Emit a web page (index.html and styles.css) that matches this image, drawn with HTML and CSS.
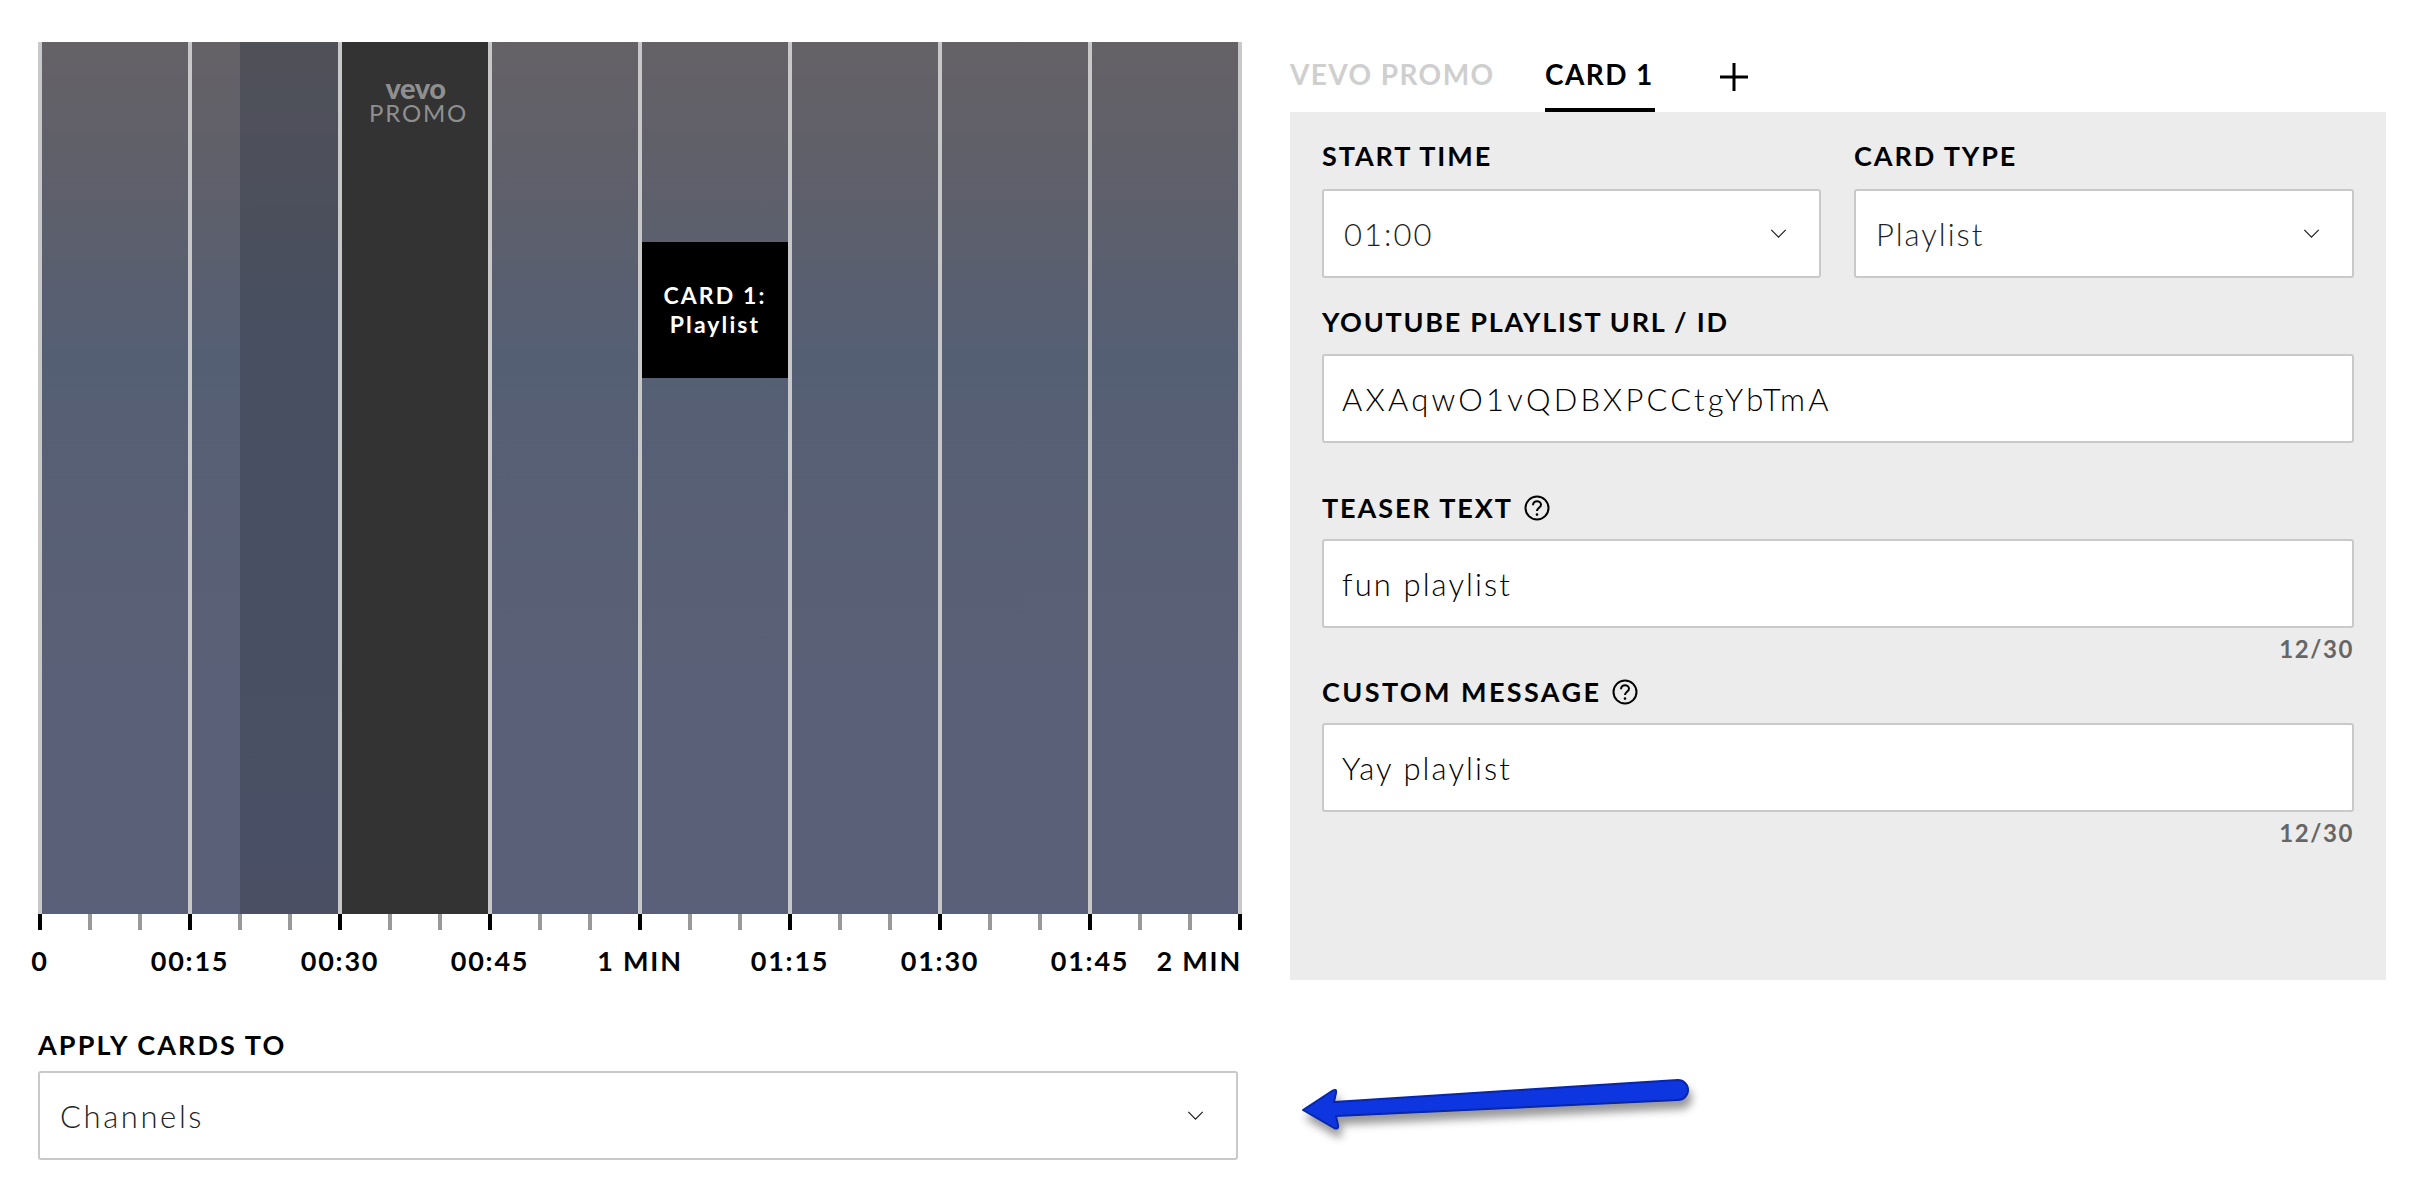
FILE: index.html
```html
<!DOCTYPE html>
<html lang="en">
<head>
<meta charset="utf-8">
<title>Cards</title>
<link rel="stylesheet" href="styles.css">
</head>
<body>
<main class="page">
  <section class="left">
    <div class="timeline">
      <div class="seg"></div>
      <div class="seg"><div class="shade"></div></div>
      <div class="seg promo"><div class="vevo">vevo</div><div class="promo-text">PROMO</div></div>
      <div class="seg"></div>
      <div class="seg"><div class="card-block">CARD 1:<br>Playlist</div></div>
      <div class="seg"></div>
      <div class="seg"></div>
      <div class="seg"></div>
    </div>
    <div class="ticks"></div>
    <div class="tick-labels">
      <span class="tl">0</span><span class="tl">00:15</span><span class="tl">00:30</span><span class="tl">00:45</span><span class="tl">1 MIN</span><span class="tl">01:15</span><span class="tl">01:30</span><span class="tl">01:45</span><span class="tl end">2 MIN</span>
    </div>
    <div class="apply">
      <label class="label">APPLY CARDS TO</label>
      <div class="box select"><span class="value dim wide">Channels</span><svg class="chev" viewBox="0 0 18 10"><path d="M1 1l8 8 8-8"/></svg></div>
    </div>
  </section>
  <section class="right">
    <nav class="tabs">
      <span class="tab off">VEVO PROMO</span>
      <span class="tab on">CARD 1</span>
      <svg class="plus" viewBox="0 0 28 28"><path d="M14 0v28M0 14h28"/></svg>
    </nav>
    <div class="panel">
      <div class="row">
        <div class="field"><label class="label">START TIME</label><div class="box select"><span class="value dim">01:00</span><svg class="chev" viewBox="0 0 18 10"><path d="M1 1l8 8 8-8"/></svg></div></div>
        <div class="field"><label class="label">CARD TYPE</label><div class="box select"><span class="value dim">Playlist</span><svg class="chev" viewBox="0 0 18 10"><path d="M1 1l8 8 8-8"/></svg></div></div>
      </div>
      <div class="field url"><label class="label">YOUTUBE PLAYLIST URL / ID</label><div class="box text"><span class="value long">AXAqwO1vQDBXPCCtgYbTmA</span></div></div>
      <div class="field teaser">
        <label class="label">TEASER TEXT <svg class="help" viewBox="0 0 26 26"><circle cx="13" cy="13" r="11.5"/><path d="M9 10.2c0-2.4 1.8-3.9 4-3.9s4 1.4 4 3.5c0 3-4 3-4 6.2"/><circle class="dot" cx="13" cy="19.6" r="1.3"/></svg></label>
        <div class="box text"><span class="value">fun playlist</span></div>
        <div class="count">12/30</div>
      </div>
      <div class="field custom">
        <label class="label">CUSTOM MESSAGE <svg class="help" viewBox="0 0 26 26"><circle cx="13" cy="13" r="11.5"/><path d="M9 10.2c0-2.4 1.8-3.9 4-3.9s4 1.4 4 3.5c0 3-4 3-4 6.2"/><circle class="dot" cx="13" cy="19.6" r="1.3"/></svg></label>
        <div class="box text"><span class="value">Yay playlist</span></div>
        <div class="count">12/30</div>
      </div>
    </div>
    <svg class="arrow" viewBox="0 0 420 84" width="420" height="84">
      <defs><filter id="sh" x="-5%" y="-40%" width="110%" height="200%"><feDropShadow dx="3" dy="8" stdDeviation="4" flood-color="#000" flood-opacity=".4"/></filter></defs>
      <path filter="url(#sh)" d="M13 40 L42 21 Q47 18 46 23 L44 32 L388 10 A10 10 0 0 1 388 30 L46 46 L48 55 Q49 60 44 58 Z" fill="#0a35e0" stroke="#0726a8" stroke-width="2" stroke-linejoin="round"/>
    </svg>
  </section>
</main>
</body>
</html>
```
FILE: styles.css
```css
* { box-sizing: border-box; }
html, body { margin: 0; padding: 0; background: #fff; }
body { width: 2420px; height: 1188px; overflow: hidden; font-family: Lato, "Noto Sans", sans-serif; color: #000; }
.page { display: flex; gap: 48px; padding: 42px 0 0 38px; }
.left { width: 1204px; flex: none; }
.right { width: 1096px; flex: none; position: relative; margin-top: -42px; }

.timeline { display: flex; width: 1204px; height: 872px; border-right: 4px solid #c8c8c8; background: linear-gradient(180deg, #656266 0%, #5d5f6c 20%, #555f74 36%, #596076 60%, #5a6079 100%); }
.seg { position: relative; flex: 0 0 150px; border-left: 4px solid #c8c8c8; }
.shade { position: absolute; top: 0; bottom: 0; left: 48px; right: 0; background: rgba(50, 55, 70, .4); }
.promo { background: #333; display: flex; flex-direction: column; align-items: center; color: #8f8f8f; padding: 34px 0 0 7px; }
.vevo { font-size: 29px; line-height: 24px; font-weight: 900; letter-spacing: -.5px; margin-right: 6px; }
.promo-text { font-size: 24px; line-height: 25px; letter-spacing: 1.8px; }
.card-block { position: absolute; left: 0; top: 200px; width: 146px; height: 136px; background: #000; color: #fff; display: flex; align-items: center; justify-content: center; text-align: center; font-size: 23px; line-height: 29px; font-weight: 700; letter-spacing: 2.1px; }

.ticks { width: 1204px; height: 16px; background:
  repeating-linear-gradient(90deg, #000 0 4px, transparent 4px 150px),
  repeating-linear-gradient(90deg, #999 0 4px, transparent 4px 50px); }
.tick-labels { display: flex; gap: 146px; height: 46px; padding-top: 15px; width: 1204px; }
.tl { flex: 0 0 4px; width: 4px; display: flex; justify-content: center; white-space: nowrap; font-size: 27px; line-height: 32px; font-weight: 700; letter-spacing: 1.8px; }
.tl.end { justify-content: flex-end; }

.apply { margin-top: 53px; width: 1200px; }
.apply .box { margin-top: 10px; }
.apply .label { letter-spacing: 2.1px; }
.label { display: flex; align-items: center; gap: 11px; font-size: 27px; line-height: 32px; font-weight: 700; letter-spacing: 1.9px; white-space: nowrap; }
.box { display: flex; align-items: center; justify-content: space-between; height: 89px; background: #fff; border: 2px solid #c9c9c9; border-radius: 3px; padding: 0 18px 0 20px; margin-top: 16px; }
.box.text { padding-left: 18px; }
.value { font-size: 31px; font-weight: 300; letter-spacing: 2.1px; color: #000; }
.value.long { letter-spacing: 3.2px; }
.value.dim { letter-spacing: 2px; color: #222; }
.value.wide { letter-spacing: 2.6px; }
.chev { width: 17px; height: 9px; margin-right: 14px; fill: none; stroke: #222; stroke-width: 1.4; flex: none; }

.tabs { display: flex; height: 112px; padding-top: 56px; align-items: flex-start; }
.tab { display: block; height: 56px; font-size: 28px; line-height: 36px; font-weight: 700; letter-spacing: 1.4px; white-space: nowrap; }
.tab.off { color: #cfcfcf; width: 255px; }
.tab.on { width: 110px; border-bottom: 4px solid #000; }
.plus { width: 28px; height: 28px; margin: 7px 0 0 65px; fill: none; stroke: #000; stroke-width: 3; }

.panel { height: 868px; background: #ececec; padding: 28px 32px 0; }
.row { display: grid; grid-template-columns: 499px 1fr; gap: 33px; }
.row .box { margin-top: 17px; }
.url { margin-top: 28px; }
.url .label { letter-spacing: 1.75px; }
.teaser { margin-top: 49px; }
.custom { margin-top: 12px; }
.custom .label { letter-spacing: 2.4px; }
.teaser .box, .custom .box { margin-top: 15px; }
.count { text-align: right; font-size: 24px; line-height: 30px; margin-top: 6px; letter-spacing: 1.6px; color: #666; font-weight: 700; }
.help { width: 26px; height: 26px; fill: none; stroke: #000; stroke-width: 2; }
.help .dot { fill: #000; stroke: none; }

.arrow { position: absolute; left: 0; top: 1070px; }
```
